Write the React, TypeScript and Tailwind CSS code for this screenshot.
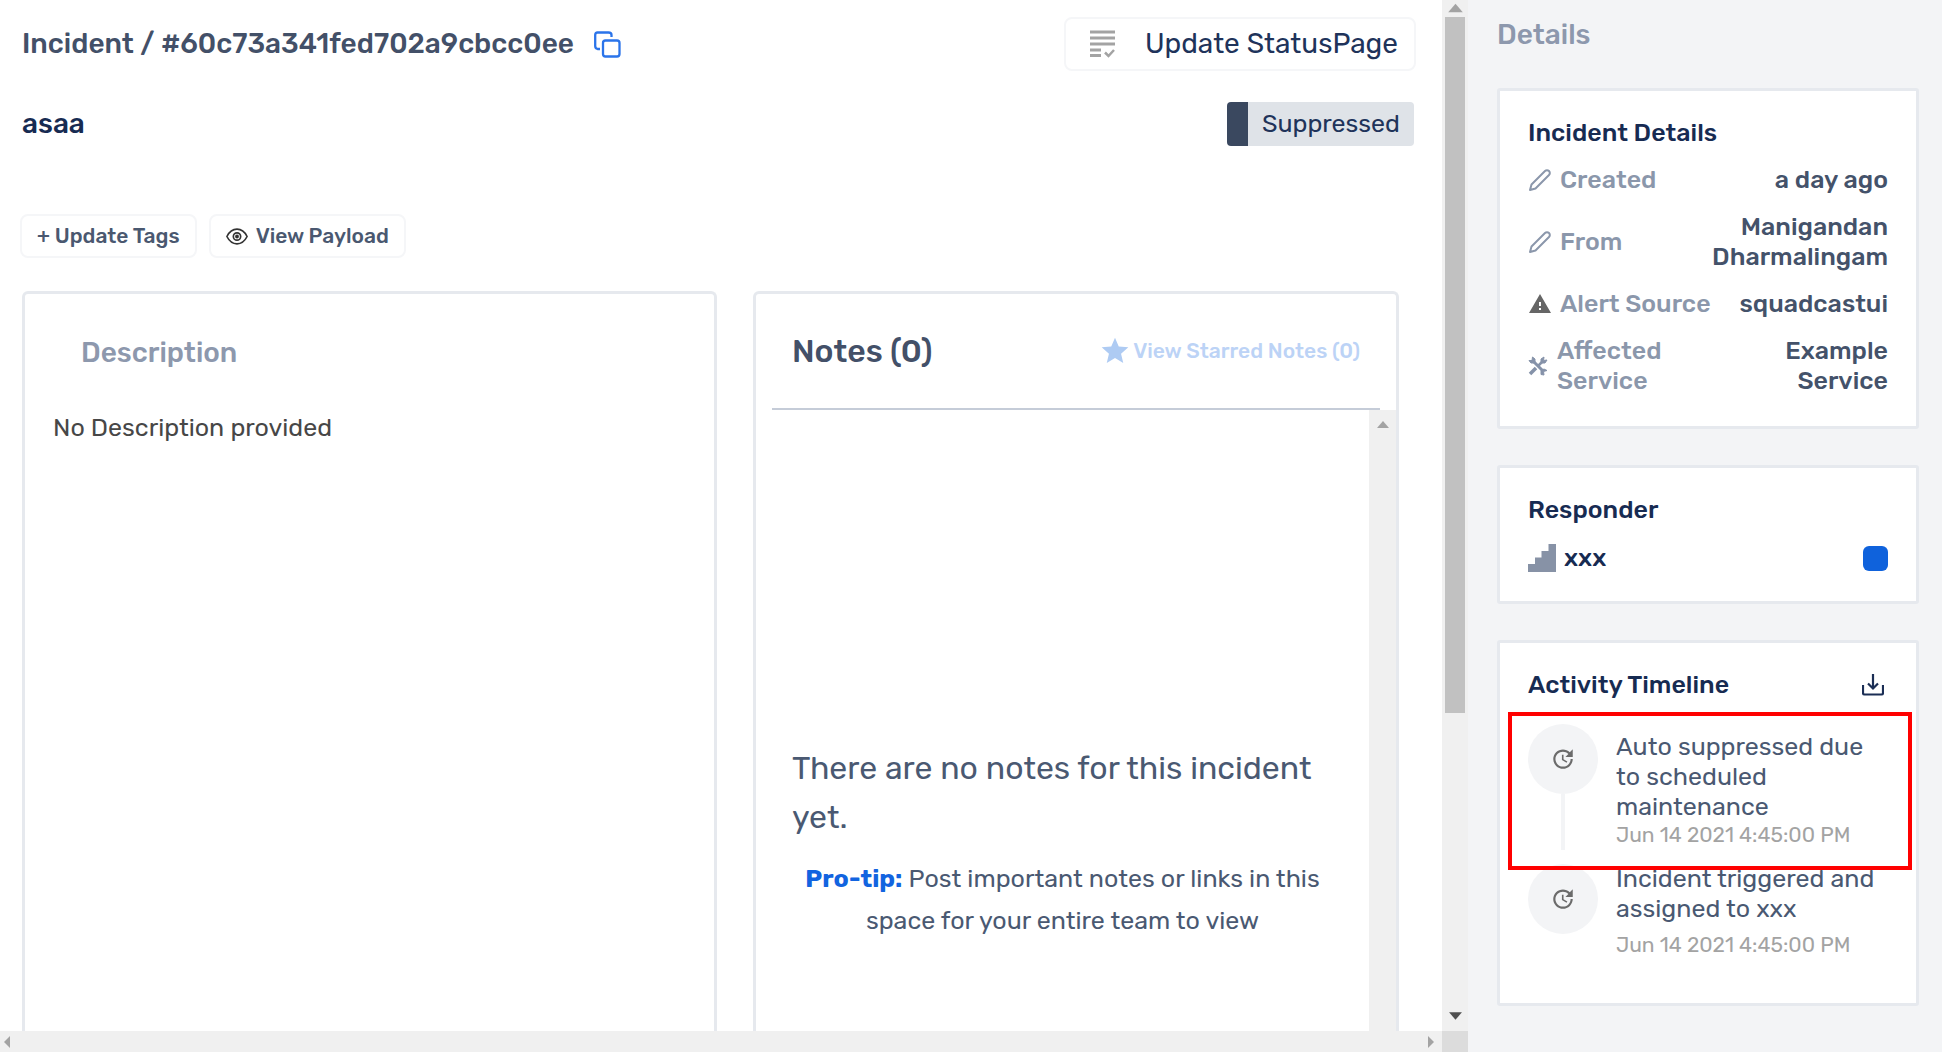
import type { ReactNode } from 'react';
import { FiEdit2 } from 'react-icons/fi';
import { MdUpdate, MdWarning, MdStar } from 'react-icons/md';

function CopyIcon() {
  return (
    <svg viewBox="0 0 27 27" className="size-[27px]" fill="none" stroke="#2b74ea" strokeWidth="2.300">
      <path d="M6 18H3.500Q1.200 17.500 1.200 15V4Q1.200 1.500 3.500 1.500H14.500Q17.500 1.500 17.500 4V6" />
      <rect x="9" y="9.500" width="16.500" height="16" rx="2.500" />
    </svg>
  );
}

function ChecklistIcon() {
  return (
    <svg viewBox="0 0 25 28" className="h-7 w-[25px]" fill="none" stroke="#a3a3a3" strokeWidth="3">
      <path d="M0 2H25M0 8H25M0 14H25M0 20H11M0 25.500H11" />
      <path d="M15 22.500L18.500 26L24 20" strokeWidth="2.500" />
    </svg>
  );
}

function EyeIcon() {
  return (
    <svg viewBox="0 0 24 18" className="h-[17px] w-[22px]" fill="none" stroke="#333" strokeWidth="1.800">
      <path d="M1 9Q5 1 12 1T23 9Q19 17 12 17T1 9Z" />
      <circle cx="12" cy="9" r="4" />
      <circle cx="12" cy="9" r="1.200" fill="#333" />
    </svg>
  );
}

function ToolsIcon() {
  return (
    <svg viewBox="0 0 20 20" className="size-5 shrink-0" fill="#8592a9" stroke="#8592a9">
      <path d="M2 18L8 12" strokeWidth="3.500" />
      <path d="M10 10L15 5" strokeWidth="2.500" />
      <path d="M13 6V3L16 1L15.500 4.500L19 4L17 7H14Z" strokeWidth="1" />
      <path d="M5 5L15 15" strokeWidth="3" />
      <path d="M1 4.500L4 4.500L4.500 1L7 3V7H3Z" strokeWidth="1" />
      <path d="M13 18.500L13 14.500L16 13L19 14.500L15.500 15.500L16 19Z" strokeWidth="1" />
    </svg>
  );
}

function StairsIcon() {
  return (
    <svg viewBox="0 0 28 28" className="size-7" fill="#8792a6">
      <path d="M0 28V20H7V13.500H13.500V7H20.500V0H28V28Z" />
    </svg>
  );
}

function DownloadIcon() {
  return (
    <svg viewBox="0 0 22 22" className="size-[22px]" fill="none" stroke="#1b2e55" strokeWidth="2.200">
      <path d="M1 11V19Q1 20.500 2.500 20.500H19.500Q21 20.500 21 19V11M11 0V14M6 9.500L11 14.500L16 9.500" />
    </svg>
  );
}

function Arrow({ className, d }: { className: string; d: string }) {
  return (
    <svg viewBox="0 0 14 14" className={className}>
      <path d={d} fill="currentColor" />
    </svg>
  );
}

const UP = 'M7 3L13 10H1Z';
const DOWN = 'M7 11L13 4H1Z';
const LEFT = 'M4 7L10 1V13Z';
const RIGHT = 'M10 7L4 1V13Z';

function Card({ title, action, children }: { title: string; action?: ReactNode; children: ReactNode }) {
  return (
    <section className="rounded-[3px] border-[3px] border-[#e6e9ee] bg-white px-7 py-[27px]">
      <div className="flex items-center justify-between">
        <h3 className="text-[25px] leading-[30px] font-medium text-[#172b52]">{title}</h3>
        {action}
      </div>
      {children}
    </section>
  );
}

function DetailRow({ icon, label, value, wrap }: { icon: ReactNode; label: string; value: string; wrap?: boolean }) {
  return (
    <div className="mt-[17px] flex items-center justify-between">
      <dt
        className={
          wrap ? 'flex w-36 items-center gap-[9px] text-[#8b97ab]' : 'flex shrink-0 items-center gap-2 text-[#8b97ab]'
        }
      >
        {icon}
        {label}
      </dt>
      <dd className={wrap ? 'w-28 text-right text-[#44526a]' : 'max-w-[178px] text-right text-[#44526a]'}>{value}</dd>
    </div>
  );
}

function Event({ text, time, last }: { text: string; time: string; last?: boolean }) {
  return (
    <li className="flex items-start gap-[18px]">
      <div className="flex shrink-0 flex-col items-center">
        <span className="flex size-[70px] items-center justify-center rounded-full bg-[#f3f4f6]">
          <MdUpdate className="size-[26px] text-[#6b6b6b]" />
        </span>
        {!last && <span className="h-14 w-1 bg-[#f3f4f6]" />}
      </div>
      <div className={last ? '' : 'pt-2'}>
        <p className="text-[25px] leading-[30px] text-[#4a5972]">{text}</p>
        <time className={last ? 'mt-2 block text-[21px] leading-[26px] text-[#a3a3a3]' : 'block text-[21px] leading-[26px] text-[#a3a3a3]'}>
          {time}
        </time>
      </div>
    </li>
  );
}

export default function App() {
  return (
    <div className="flex h-screen overflow-hidden bg-white font-['Rubik','Roboto',sans-serif]">
      <div className="flex min-w-0 flex-1 flex-col">
        <div className="flex min-h-0 flex-1">
          <main className="flex min-w-0 flex-1 flex-col overflow-hidden pl-[22px]">
            <header className="flex items-center justify-between pt-[17px] pr-[26px]">
              <div className="flex items-center gap-5">
                <h1 className="text-[28px] leading-9 font-medium text-[#435068]">Incident / #60c73a341fed702a9cbcc0ee</h1>
                <button type="button" aria-label="Copy incident ID">
                  <CopyIcon />
                </button>
              </div>
              <button
                type="button"
                className="flex h-[54px] items-center gap-[30px] rounded-lg border-2 border-[#f5f6f8] pr-4 pl-6 text-[28px] leading-9 text-[#20335a]"
              >
                <ChecklistIcon />
                Update StatusPage
              </button>
            </header>
            <div className="mt-[31px] flex items-center justify-between pr-7">
              <h2 className="text-[28px] leading-9 font-medium text-[#172b52]">asaa</h2>
              <span className="flex h-11 items-center rounded border-l-[21px] border-[#3a485f] bg-[#dfe3e8] px-[14px] text-[25px] leading-9 text-[#20335a]">
                Suppressed
              </span>
            </div>
            <div className="mt-[68px] -ml-0.5 flex gap-3">
              <button
                type="button"
                className="h-11 rounded-lg border-2 border-[#f5f6f8] px-[15px] text-[21px] leading-7 font-medium text-[#4a5870]"
              >
                + Update Tags
              </button>
              <button
                type="button"
                className="flex h-11 items-center gap-2 rounded-lg border-2 border-[#f5f6f8] px-[15px] text-[21px] leading-7 font-medium text-[#4a5870]"
              >
                <EyeIcon />
                View Payload
              </button>
            </div>
            <div className="mt-[33px] grid min-h-0 flex-1 grid-cols-[695fr_646fr] gap-9 pr-[43px]">
              <section className="rounded-t-md border-[3px] border-b-0 border-[#e6e9ee] px-7">
                <h2 className="mt-[41px] ml-7 text-[28px] leading-9 font-medium text-[#8d98ad]">Description</h2>
                <p className="mt-[39px] text-[25px] leading-9 text-[#474747]">No Description provided</p>
              </section>
              <section className="flex min-h-0 flex-col rounded-t-md border-[3px] border-b-0 border-[#e6e9ee]">
                <div className="mx-4 flex items-center justify-between border-b-2 border-[#c5ccd8] px-5 py-9">
                  <h2 className="text-[32px] leading-[42px] font-medium text-[#435068]">Notes (0)</h2>
                  <button
                    type="button"
                    disabled
                    className="flex h-10 items-center gap-0.5 text-[21px] leading-7 font-medium text-[#bcd3f6]"
                  >
                    <MdStar className="size-8 text-[#aecbf3]" />
                    View Starred Notes (0)
                  </button>
                </div>
                <div className="flex min-h-0 flex-1">
                  <div className="flex-1 overflow-hidden px-9 pt-[334px]">
                    <p className="text-[32px] leading-[49px] text-[#4a5972]">There are no notes for this incident yet.</p>
                    <p className="mt-4 text-center text-[25px] leading-[42px] text-[#4a5972]">
                      <strong className="font-bold text-[#1264e0]">Pro-tip:</strong> Post important notes or links in this
                      space for your entire team to view
                    </p>
                  </div>
                  <div className="flex w-[27px] justify-center bg-[#f0f0f0] pt-2 text-[#a3a3a3]">
                    <Arrow className="size-[14px]" d={UP} />
                  </div>
                </div>
              </section>
            </div>
          </main>
          <div className="flex w-[26px] flex-col items-center justify-between bg-[#f0f0f0] pb-2">
            <div className="flex flex-1 flex-col items-center">
              <Arrow className="size-[17px] text-[#a3a3a3]" d={UP} />
              <div className="h-[69%] w-5 bg-[#c1c1c1]" />
            </div>
            <Arrow className="size-[15px] text-[#505050]" d={DOWN} />
          </div>
        </div>
        <div className="flex h-[21px] bg-[#f0f0f0] text-[#a3a3a3]">
          <div className="flex flex-1 items-center justify-between pr-1">
            <Arrow className="size-[14px]" d={LEFT} />
            <Arrow className="size-[14px]" d={RIGHT} />
          </div>
          <div className="w-[26px] bg-[#dcdcdc]" />
        </div>
      </div>
      <aside className="w-[474px] shrink-0 bg-[#f3f4f6] pr-[23px] pl-[29px]">
        <h2 className="pt-[17px] text-[28px] leading-9 font-medium text-[#8d98ad]">Details</h2>
        <div className="mt-[35px] flex flex-col gap-9">
          <Card title="Incident Details">
            <dl className="pb-[3px] text-[25px] leading-[30px] font-medium">
              <DetailRow icon={<FiEdit2 className="size-6 shrink-0" />} label="Created" value="a day ago" />
              <DetailRow icon={<FiEdit2 className="size-6 shrink-0" />} label="From" value="Manigandan Dharmalingam" />
              <DetailRow icon={<MdWarning className="size-6 shrink-0 text-[#666]" />} label="Alert Source" value="squadcastui" />
              <DetailRow wrap icon={<ToolsIcon />} label="Affected Service" value="Example Service" />
            </dl>
          </Card>
          <Card title="Responder">
            <div className="mt-[17px] flex h-8 items-center justify-between">
              <div className="flex items-center gap-2 text-[25px] leading-[30px] font-medium text-[#172b52]">
                <StairsIcon />
                xxx
              </div>
              <span className="size-[25px] rounded-md bg-[#0f62dc]" />
            </div>
          </Card>
          <Card
            title="Activity Timeline"
            action={
              <button type="button" aria-label="Download timeline" className="mr-1">
                <DownloadIcon />
              </button>
            }
          >
            <div className="relative mt-6 pb-[18px]">
              <ul className="flex flex-col gap-[14px]">
                <Event text="Auto suppressed due to scheduled maintenance" time="Jun 14 2021 4:45:00 PM" />
                <Event last text="Incident triggered and assigned to xxx" time="Jun 14 2021 4:45:00 PM" />
              </ul>
              <div className="absolute -top-3 -right-6 -left-5 h-[158px] border-4 border-[#ff0000]" />
            </div>
          </Card>
        </div>
      </aside>
    </div>
  );
}
